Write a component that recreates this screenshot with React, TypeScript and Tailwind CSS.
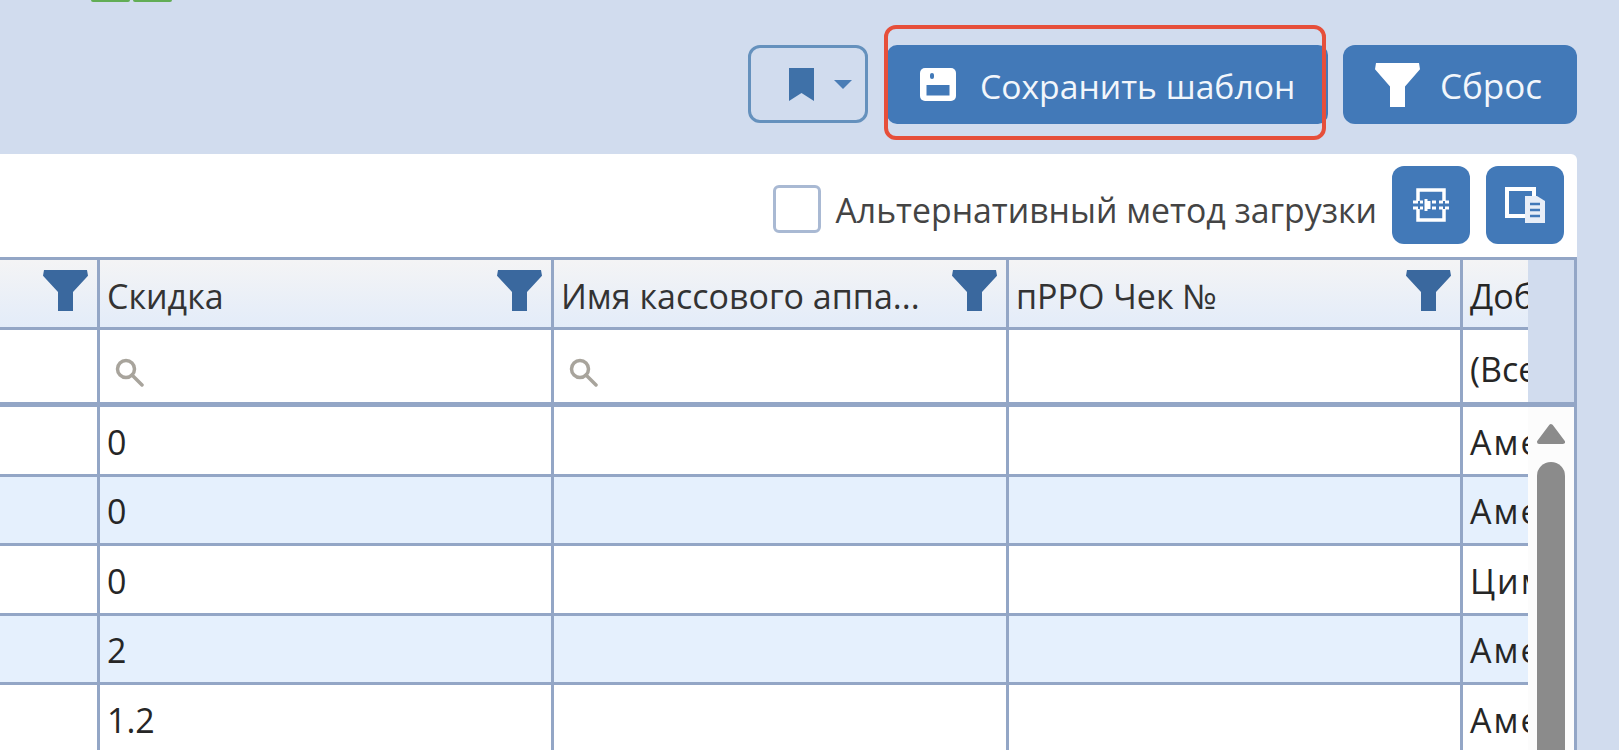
import type { ReactNode } from 'react'

const font = "font-['Open_Sans','Noto_Sans',sans-serif]"
const cols = 'grid-cols-[97px_454px_455px_454px_68px]'

function FunnelIcon({ className }: { className: string }) {
  return (
    <svg viewBox="0 0 45 43" className={className} fill="currentColor" preserveAspectRatio="none" aria-hidden="true">
      <path d="M1 0H44L45 6L30 23V43H15V23L0 6Z" />
    </svg>
  )
}

function SearchIcon() {
  return (
    <svg viewBox="0 0 30 30" className="mt-[12px] h-[30px] w-[30px] text-[#a8a49c]" fill="none" stroke="currentColor" aria-hidden="true">
      <circle cx="12" cy="12" r="8.5" strokeWidth="3.5" />
      <path d="M18 18L28 28" strokeWidth="3.5" strokeLinecap="round" />
    </svg>
  )
}

function SaveIcon() {
  return (
    <svg viewBox="0 0 36 33" className="h-[33px] w-[36px]" aria-hidden="true">
      <rect width="36" height="33" rx="5" fill="#fff" />
      <rect x="10" y="5" width="4" height="6" rx="2" fill="#4279b8" />
      <rect x="6.5" y="17" width="23" height="10.5" fill="#4279b8" />
    </svg>
  )
}

function BookmarkIcon() {
  return (
    <svg viewBox="0 0 25 33" className="h-[33px] w-[25px] text-[#3f71a8]" fill="currentColor" aria-hidden="true">
      <path d="M0 0H25V33L12.5 25L0 33Z" />
    </svg>
  )
}

function LoadIcon() {
  return (
    <svg viewBox="0 0 36 34" className="h-[34px] w-[36px]" fill="none" stroke="#fff" aria-hidden="true">
      <path d="M5 13V2H31V13M5 21V32H31V21" strokeWidth="3.5" />
      <path d="M0 14H5M7 14H10M0 20H5M7 20H10M13 11V23M16 13V21M19 14H23M19 20H23M26 14H30M32 14H36M26 20H30M32 20H36" strokeWidth="3" />
    </svg>
  )
}

function CopyDocIcon() {
  return (
    <svg viewBox="0 0 40 36" className="h-[36px] w-[40px]" aria-hidden="true">
      <rect x="2" y="2" width="27" height="27" fill="none" stroke="#fff" strokeWidth="4" />
      <path d="M20 9H32L40 14V36H20Z" fill="#e8eef7" />
      <path d="M25 17H35M25 23H35M25 29H35" stroke="#4279b8" strokeWidth="2.5" />
    </svg>
  )
}

function ToolButton({ children }: { children: ReactNode }) {
  return (
    <button className="flex h-[78px] w-[78px] items-center justify-center rounded-[12px] bg-[#4279b8]">
      {children}
    </button>
  )
}

function HeaderCell({ title, first }: { title?: string; first?: boolean }) {
  return (
    <div className={`flex h-[67px] items-start justify-between overflow-hidden bg-gradient-to-b from-[#f4f4f5] to-[#e3ecf9] pr-[9px] ${first ? '' : 'border-l-[3px] border-[#93a6c6] pl-[7px]'}`}>
      <span className="mt-[11px] truncate text-[#333]">{title}</span>
      <FunnelIcon className="mt-[10px] h-[41px] w-[45px] shrink-0 text-[#3a689e]" />
    </div>
  )
}

function FilterCell({ search, first, children }: { search?: boolean; first?: boolean; children?: ReactNode }) {
  return (
    <div className={`flex h-full items-center overflow-hidden whitespace-nowrap bg-white ${first ? '' : 'border-l-[3px] border-[#93a6c6]'} ${search ? 'pl-[14px]' : 'pl-[7px]'}`}>
      {search && <SearchIcon />}
      {children}
    </div>
  )
}

const rows = [
  { discount: '0', who: 'Аметист' },
  { discount: '0', who: 'Аметист' },
  { discount: '0', who: 'Цимбал' },
  { discount: '2', who: 'Аметист' },
  { discount: '1.2', who: 'Аметист' },
]

function Row({ discount, who, odd }: { discount: string; who: string; odd: boolean }) {
  const border = 'border-l-[3px] border-[#93a6c6]'
  return (
    <div className={`grid h-[69.5px] shrink-0 ${cols} border-b-[3px] border-[#93a6c6] ${odd ? 'bg-[#e5f0fd]' : 'bg-white'}`}>
      <div />
      <div className={`${border} flex items-center pl-[7px] pt-[4px]`}>{discount}</div>
      <div className={border} />
      <div className={border} />
      <div className={`${border} flex items-center overflow-hidden whitespace-nowrap pl-[7px] pt-[4px] tracking-[2px]`}>{who}</div>
    </div>
  )
}

export default function App() {
  return (
    <div className={`flex h-[750px] w-[1619px] flex-col overflow-hidden bg-[#d1dcee] ${font}`}>
      {/* top toolbar */}
      <div className="h-[154px] shrink-0 pr-[42px]">
        <div className="ml-[91px] flex h-[2px] w-[81px] gap-[3px]">
          <div className="flex-1 rounded-b-[2px] bg-[#62ad55]" />
          <div className="flex-1 rounded-b-[2px] bg-[#62ad55]" />
        </div>
        <div className="mt-[43px] flex justify-end">
          <button className="flex h-[78px] w-[120px] items-center rounded-[12px] border-[3px] border-[#6591bd] pl-[38px]">
            <BookmarkIcon />
            <span className="ml-[20px] h-0 w-0 border-x-[9px] border-t-[9px] border-x-transparent border-t-[#4a7db5]" />
          </button>
          <div className="relative ml-[19px]">
            <button className="flex h-[79px] w-[441px] items-center rounded-[10px] bg-[#4279b8] pl-[33px] text-[33.7px] text-[#f2f6fb]">
              <SaveIcon />
              <span className="ml-[24px] pt-[4px]">Сохранить шаблон</span>
            </button>
            <div className="absolute -left-[3px] -top-[20px] h-[115px] w-[442px] rounded-[12px] border-4 border-[#e64f3a]" />
          </div>
          <button className="ml-[15px] flex h-[79px] w-[234px] items-center rounded-[12px] bg-[#4279b8] pl-[32px] text-[35px] text-[#f2f6fb]">
            <FunnelIcon className="h-[44px] w-[45px] text-white" />
            <span className="ml-[20px] pt-[4px]">Сброс</span>
          </button>
        </div>
      </div>

      {/* grid panel */}
      <div className="flex w-[1577px] flex-1 flex-col overflow-hidden rounded-tr-[6px] bg-white text-[34px] text-[#262626]">
        <div className="flex h-[103px] shrink-0 items-start justify-end pr-[13px] pt-[12px]">
          <div className="mt-[19px] h-[48px] w-[48px] rounded-[6px] border-[3px] border-[#a9b9d3] bg-white" />
          <span className="ml-[14px] mt-[21px] text-[33.8px] leading-[47px] text-[#444]">Альтернативный метод загрузки</span>
          <div className="ml-[15px] flex gap-[16px]">
            <ToolButton><LoadIcon /></ToolButton>
            <ToolButton><CopyDocIcon /></ToolButton>
          </div>
        </div>

        <div className="flex min-h-0 flex-1 flex-col border-r-[3px] border-t-[3px] border-[#93a6c6]">
          {/* header + filter row */}
          <div className="flex h-[147px] shrink-0 border-b-[5px] border-[#93a6c6]">
            <div className="w-[1528px] shrink-0">
              <div className={`grid ${cols} border-b-[3px] border-[#93a6c6]`}>
                <HeaderCell first />
                <HeaderCell title="Скидка" />
                <HeaderCell title="Имя кассового аппа..." />
                <HeaderCell title="пРРО Чек №" />
                <div className="h-[67px] overflow-hidden whitespace-nowrap border-l-[3px] border-[#93a6c6] bg-gradient-to-b from-[#f4f4f5] to-[#e3ecf9] pl-[7px] pt-[11px]">Добавил</div>
              </div>
              <div className={`grid h-[72px] ${cols}`}>
                <FilterCell first />
                <FilterCell search />
                <FilterCell search />
                <FilterCell />
                <FilterCell><span className="pt-[6px]">(Все)</span></FilterCell>
              </div>
            </div>
            <div className="flex-1 bg-[#d1dcee]" />
          </div>

          {/* body rows + scrollbar */}
          <div className="flex min-h-0 flex-1">
            <div className="flex w-[1528px] shrink-0 flex-col overflow-hidden">
              {rows.map((row, i) => (
                <Row key={i} discount={row.discount} who={row.who} odd={i % 2 === 1} />
              ))}
            </div>
            <div className="flex flex-1 flex-col items-center bg-[#fcfcfc] pt-[16px]">
              <svg viewBox="0 0 28 21" className="h-[21px] w-[28px] shrink-0 text-[#8b8b8b]" fill="currentColor" stroke="currentColor" strokeWidth="4" strokeLinejoin="round" aria-hidden="true">
                <path d="M14 3L26 19H2Z" />
              </svg>
              <div className="mt-[18px] w-[28px] flex-1 rounded-t-[14px] bg-[#8b8b8b]" />
            </div>
          </div>
        </div>
      </div>
    </div>
  )
}
